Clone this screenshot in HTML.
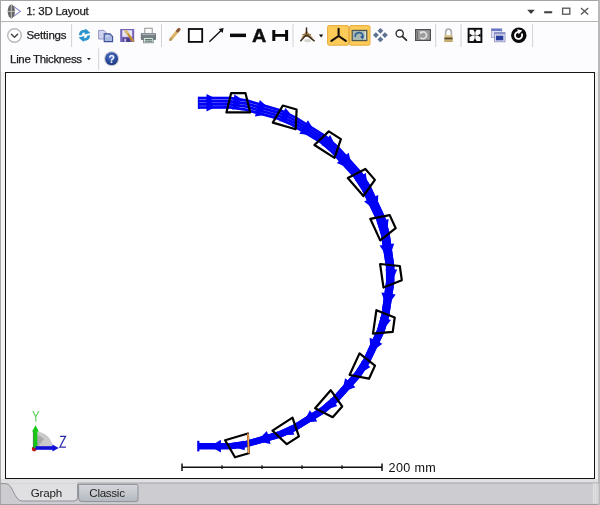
<!DOCTYPE html>
<html><head><meta charset="utf-8">
<style>
html,body{margin:0;padding:0;}
body{width:600px;height:505px;overflow:hidden;background:#f0f0f0;font-family:"Liberation Sans",sans-serif;position:relative;}
.abs{position:absolute;}
#win{position:absolute;left:0;top:0;width:600px;height:505px;background:#fcfbfe;}
#margin{position:absolute;left:1px;top:72px;width:597px;height:411px;background:#f3f3f5;}
#topline{position:absolute;left:0;top:0;width:600px;height:1px;background:#a4a4a4;}
#leftline{position:absolute;left:0;top:0;width:1px;height:505px;background:#a8a8a8;}
#rightline{position:absolute;left:598px;top:0;width:2px;height:505px;background:#b8b8b8;}
#title{position:absolute;left:1px;top:1px;width:597px;height:20px;background:#ffffff;}
#titlesep{position:absolute;left:1px;top:20.5px;width:597px;height:1px;background:#b4b4b4;}
.t{position:absolute;white-space:nowrap;color:#1c1c1c;font-size:11.5px;line-height:14px;filter:blur(0.3px);-webkit-text-stroke:0.25px #1c1c1c;}
#plot{position:absolute;left:4.5px;top:71.8px;width:588.5px;height:405.3px;border:1.5px solid #141414;background:#fff;box-sizing:content-box;}
#bottom{position:absolute;left:1px;top:483px;width:598px;height:22px;background:#cdcdd1;}
#bottomtop{position:absolute;left:1px;top:482.5px;width:598px;height:1px;background:#a6a6aa;}
#bottomline{position:absolute;left:0;top:503.5px;width:600px;height:1.5px;background:#9c9ca0;}
</style></head><body>
<div id="win"></div>
<div id="margin"></div>
<div id="title"></div>
<div id="titlesep"></div>
<div id="plot"></div>
<div id="bottom"></div>
<div id="bottomtop"></div>
<div id="bottomline"></div>
<div id="topline"></div><div id="leftline"></div><div id="rightline"></div>

<div class="t" style="left:26.2px;top:4.4px;letter-spacing:-0.24px;">1: 3D Layout</div>
<div class="t" style="left:26.4px;top:28.4px;letter-spacing:-0.2px;">Settings</div>
<div class="t" style="left:10.1px;top:52.1px;letter-spacing:-0.35px;">Line Thickness</div>

<svg class="abs" style="left:0;top:0" width="600" height="505" viewBox="0 0 600 505">
<defs>
<filter id="bl" x="-20%" y="-20%" width="140%" height="140%"><feGaussianBlur stdDeviation="0.45"/></filter>
<filter id="bl2" x="-20%" y="-20%" width="140%" height="140%"><feGaussianBlur stdDeviation="0.3"/></filter>
<radialGradient id="helpg" cx="0.45" cy="0.35" r="0.7"><stop offset="0" stop-color="#5a7fd0"/><stop offset="0.6" stop-color="#2a4a9c"/><stop offset="1" stop-color="#1a2f70"/></radialGradient>
<linearGradient id="tabg" x1="0" y1="0" x2="0" y2="1"><stop offset="0" stop-color="#d6d8dc"/><stop offset="1" stop-color="#b4b8c0"/></linearGradient>
</defs>
<!-- title icon -->
<g filter="url(#bl2)">
<path d="M13.6,6.4 L20.4,11.4 L13.6,16.4" fill="#fff" stroke="#7a82c8" stroke-width="1.1" stroke-linejoin="round"/>
<ellipse cx="11.3" cy="11.4" rx="3.6" ry="7" fill="#666"/>
<path d="M11.3,4.6 V18.2 M7.8,11.4 H14.8" stroke="#c8c8c8" stroke-width="0.9"/>
</g>
<!-- window controls -->
<path d="M527.2,9.8 H534.8 L531,13.9 Z" fill="#3c3c3c"/>
<rect x="544.2" y="11.2" width="8" height="2.1" fill="#444"/>
<rect x="562.6" y="8.2" width="7.2" height="6" fill="none" stroke="#555" stroke-width="1.3"/>
<path d="M581,8.1 L588.2,14.5 M588.2,8.1 L581,14.5" stroke="#555" stroke-width="1.3" fill="none"/>

<!-- separators row1 -->
<g stroke="#d2d2d4" stroke-width="1">
<path d="M71.6,24 V47"/><path d="M161.5,24 V47"/><path d="M293,24 V47"/><path d="M435.7,24 V47"/><path d="M461,24 V47"/><path d="M532.6,24 V47"/>
<path d="M98.7,48.5 V70"/>
</g>

<!-- settings chevron -->
<circle cx="14.5" cy="35.5" r="6.8" fill="#fff" stroke="#bababa" stroke-width="1.4"/>
<path d="M11.4,34.2 L14.5,37.2 L17.6,34.2" fill="none" stroke="#444" stroke-width="1.5" stroke-linecap="round" stroke-linejoin="round"/>

<!-- refresh -->
<g filter="url(#bl)" fill="none" stroke="#2b94cc" stroke-width="2.7" stroke-linecap="butt">
<path d="M80.4,35.2 C80.2,31.6 84,30 87.2,32"/>
<path d="M88.6,35.4 C88.8,39 85,40.6 81.8,38.6"/>
<path d="M85.4,28.6 L90.4,33 L84.6,34.6 Z" fill="#2b94cc" stroke="none"/>
<path d="M83.6,42 L78.6,37.6 L84.4,36 Z" fill="#2b94cc" stroke="none"/>
</g>
<!-- copy -->
<g filter="url(#bl)">
<path d="M98.6,30.4 H104 L106.4,32.8 V39 H98.6 Z" fill="#d0d4ee" stroke="#8a8fc0" stroke-width="0.9"/>
<path d="M104.2,33.9 H110 L112.6,36.4 V41.6 H104.2 Z" fill="#a9b9e2" stroke="#3f4f98" stroke-width="1.1"/>
<path d="M106,36 H108.8" stroke="#e6ecfa" stroke-width="1"/>
</g>
<!-- save -->
<g filter="url(#bl)">
<rect x="120.2" y="29" width="14" height="13" fill="#7363b8"/>
<rect x="122.2" y="30.2" width="10" height="6.6" fill="#e8e2f2"/>
<rect x="123.2" y="38.2" width="7" height="3.8" fill="#4a3a8a"/>
<rect x="124.2" y="38.8" width="2" height="3" fill="#c8c0e8"/>
<path d="M125.4,30.6 L133.4,41.4" stroke="#c48c2c" stroke-width="2.4"/>
<path d="M125.2,30.2 L128,33.8" stroke="#d8c070" stroke-width="2"/>
</g>
<!-- print -->
<g filter="url(#bl)">
<rect x="144.8" y="28.2" width="7.4" height="5.4" fill="#fafafa" stroke="#8a8a8a" stroke-width="0.9"/>
<rect x="140.8" y="33" width="15.2" height="7" rx="1" fill="#727a82"/>
<rect x="141.8" y="33.6" width="13.2" height="1.6" fill="#a8aeb4"/>
<rect x="143.6" y="37.6" width="9.6" height="5.2" fill="#d0e6de" stroke="#70807a" stroke-width="0.8"/>
<path d="M145,39.6 H152 M145,41.2 H152" stroke="#404848" stroke-width="0.8"/>
</g>

<!-- pencil -->
<g filter="url(#bl2)">
<path d="M170.6,39.4 L178.6,29.8" stroke="#dcb46a" stroke-width="3.2" stroke-linecap="round"/>
<path d="M177.6,31 L179,29.4" stroke="#8c5a3c" stroke-width="3" stroke-linecap="round"/>
<path d="M170.2,40 L171.2,38.6" stroke="#b09870" stroke-width="2" stroke-linecap="round"/>
</g>
<!-- square -->
<rect x="188.8" y="29" width="13.4" height="12.9" fill="#fff" stroke="#0a0a0a" stroke-width="1.8"/>
<!-- arrow -->
<path d="M209.4,41.8 L222.4,29.2" stroke="#111" stroke-width="1.4" fill="none"/>
<path d="M223.6,28 L222.6,33 L218.6,29 Z" fill="#111"/>
<!-- thick line -->
<rect x="230" y="33.6" width="16" height="3.5" fill="#0a0a0a"/>
<!-- A -->
<text transform="translate(259.1,0) scale(1.09,1) translate(-259.1,0)" filter="url(#bl2)" x="259.1" y="41.7" font-family="Liberation Sans, sans-serif" font-weight="bold" font-size="18.2" text-anchor="middle" fill="#0a0a0a" stroke="#0a0a0a" stroke-width="0.4">A</text>
<!-- dimension H -->
<path d="M273.8,29.9 V40.9 M286.6,29.9 V40.9" stroke="#0a0a0a" stroke-width="3"/>
<path d="M273.8,35.4 H286.6" stroke="#0a0a0a" stroke-width="2.8"/>

<!-- 3d object icon -->
<g filter="url(#bl)">
<ellipse cx="307.6" cy="40.6" rx="3.4" ry="1.6" fill="#d4d4cc"/>
<path d="M306.5,30.5 L300.8,38.6 L306.5,36.6 L313.4,38.6 Z" fill="#b48c54" opacity="0.85"/>
<path d="M306.5,28 V36 M306.5,34.6 L300.8,40.8 M306.5,34.6 L314.2,40.8" stroke="#3c2c1c" stroke-width="1.5" fill="none" stroke-linecap="round"/>
<path d="M302.4,34.6 H311" stroke="#8a6a40" stroke-width="1"/>
</g>
<path d="M318.9,34.4 H323.3 L321.1,37.4 Z" fill="#111"/>

<!-- highlighted buttons -->
<rect x="327.6" y="25.6" width="21" height="19.6" rx="1.5" fill="#fccb58" stroke="#e6ab3c" stroke-width="1"/>
<rect x="349.6" y="25.6" width="20.4" height="19.6" rx="1.5" fill="#fccb58" stroke="#e6ab3c" stroke-width="1"/>
<path d="M338.6,28.8 V36 L331.4,40.8 M338.6,36 L345.8,40.8" stroke="#16100a" stroke-width="2.1" fill="none" stroke-linecap="round" stroke-linejoin="round"/>
<g filter="url(#bl2)">
<rect x="352.2" y="30.4" width="14.6" height="10.2" fill="#a9b8b0" stroke="#4c544e" stroke-width="1.2"/>
<path d="M355.4,37 A3.8,3.3 0 1 1 362.4,37.4" fill="none" stroke="#2e5f96" stroke-width="1.7"/>
<path d="M364.4,35.6 L362.6,39.4 L360,36.4 Z" fill="#2e5f96"/>
<path d="M365.2,31.6 V39.4" stroke="#e8eeea" stroke-width="1.2"/>
</g>
<!-- move icon -->
<g filter="url(#bl2)" fill="#5c7192">
<path d="M380.4,27.9 L383.3,30.8 L380.4,33.7 L377.5,30.8 Z"/>
<path d="M380.4,36.5 L383.3,39.4 L380.4,42.3 L377.5,39.4 Z"/>
<path d="M375.9,32.2 L378.8,35.1 L375.9,38.0 L373.0,35.1 Z"/>
<path d="M384.9,32.2 L387.8,35.1 L384.9,38.0 L382.0,35.1 Z"/>
</g>
<!-- magnifier -->
<circle cx="399.7" cy="33.6" r="3.6" fill="#fff" stroke="#2c2c2c" stroke-width="1.35"/>
<path d="M402.4,36.4 L406.4,40.2" stroke="#2c2c2c" stroke-width="1.8" stroke-linecap="round"/>
<!-- reset -->
<g filter="url(#bl2)">
<rect x="415.6" y="29.6" width="14.8" height="10.8" fill="#9c9c9c" stroke="#505050" stroke-width="1.2"/>
<path d="M420.2,37.4 A3.6,3.3 0 1 0 421.6,32.2" fill="none" stroke="#e0e0e0" stroke-width="1.5"/>
<path d="M419.6,31.4 L423.4,31.4 L420.6,34.6 Z" fill="#e8e8e8"/>
<path d="M417.4,31 V39" stroke="#6a6a6a" stroke-width="1"/>
</g>
<!-- lock -->
<g filter="url(#bl)">
<path d="M445.6,35.6 V32.4 A2.9,3.4 0 0 1 451.4,32.4 V35.6" fill="none" stroke="#a8a8a8" stroke-width="1.5"/>
<rect x="444.4" y="35.2" width="8.2" height="6.8" fill="#d2bc84"/>
<rect x="444.4" y="37.6" width="8.2" height="1.8" fill="#5a4a2a"/>
<rect x="444.4" y="40.4" width="8.2" height="1.6" fill="#c0a868"/>
</g>
<!-- grid icon -->
<rect x="468.6" y="28.8" width="12.8" height="13.2" fill="#fff" stroke="#0a0a0a" stroke-width="1.9"/>
<path d="M473.2,29.6 H476.8 L475,32.6 Z M473.2,41.2 H476.8 L475,38.2 Z M469.4,33.6 V37.2 L472.4,35.4 Z M480.6,33.6 V37.2 L477.6,35.4 Z" fill="#0a0a0a"/>
<path d="M475,32 V38.8 M471.8,35.4 H478.2" stroke="#555" stroke-width="0.7"/>
<!-- windows icon -->
<g filter="url(#bl)">
<rect x="491.4" y="28.8" width="10.4" height="8.6" fill="#dfe0f4" stroke="#9aa0cc" stroke-width="0.8"/>
<rect x="491.4" y="28.8" width="10.4" height="2.2" fill="#6a78c4"/>
<rect x="494.6" y="32.6" width="10.4" height="9.2" fill="#f4f4fc" stroke="#8088b8" stroke-width="0.8"/>
<rect x="494.6" y="32.6" width="10.4" height="1.8" fill="#8890c8"/>
<rect x="495.8" y="35.6" width="7.6" height="4.8" fill="#2c3c9c"/>
</g>
<!-- black circle arrow -->
<circle cx="518.8" cy="35.3" r="7.7" fill="#0a0a0a"/>
<path d="M521.6,33.4 A3.6,3.6 0 1 1 518,31.8" fill="none" stroke="#fff" stroke-width="1.8"/>
<path d="M517.2,29.2 L522.4,30.6 L518.6,34.2 Z" fill="#fff"/>

<!-- row2 dropdown arrow -->
<path d="M87,58 H90.8 L88.9,60.2 Z" fill="#222"/>
<!-- help -->
<g filter="url(#bl2)">
<circle cx="111.6" cy="58.7" r="7.4" fill="#c0c4d0"/>
<circle cx="111.6" cy="58.7" r="6.4" fill="url(#helpg)"/>
<text x="111.6" y="62.6" font-family="Liberation Sans, sans-serif" font-weight="bold" font-size="10.5" text-anchor="middle" fill="#fff">?</text>
</g>

<g filter="url(#bl2)">
<path d="M198.3,108.9 L229.9,108.8 L244.7,110.9 L277.4,119.6 L291.2,125.7 L319.9,143.1 L331.4,153.0 L353.7,177.6 L362.0,190.3 L376.3,219.9 L380.8,234.5 L385.9,266.8 L386.0,282.1 L381.4,314.5 L377.2,329.2 L363.4,359.2 L355.1,372.1 L332.9,397.0 L321.4,407.1 L292.8,424.9 L278.8,431.3 L246.2,440.7 L231.0,442.9 L198.0,443.0 L198.0,449.2 L231.4,449.3 L247.6,447.0 L281.2,437.6 L296.0,430.8 L325.5,412.6 L337.9,402.0 L360.9,376.4 L369.8,362.7 L384.5,331.9 L389.2,316.2 L394.3,282.7 L394.4,266.2 L389.5,232.6 L385.0,216.7 L370.5,185.7 L361.6,171.7 L338.4,145.9 L325.9,135.0 L296.2,116.4 L281.2,109.3 L247.2,99.3 L230.7,96.8 L198.3,96.7Z" fill="#0404f6" opacity="0.3"/>
<path d="M198.3,98.0 L230.6,98.2 L247.0,100.6 L280.7,110.5 L295.6,117.6 L325.1,136.1 L337.5,146.9 L360.5,172.5 L369.3,186.3 L383.8,217.2 L388.2,232.8 L393.0,266.3 L393.0,282.6 L387.9,316.0 L383.2,331.5 L368.6,362.0 L359.8,375.6 L336.9,401.0 L324.7,411.5 L295.4,429.6 L280.7,436.3 L247.3,445.7 L231.3,447.9 L198.0,447.9" fill="none" stroke="#0404f6" stroke-width="2.7" stroke-linejoin="round"/>
<path d="M198.3,101.2 L230.4,101.3 L246.3,103.6 L279.8,113.1 L294.3,119.9 L323.6,138.1 L335.7,148.6 L358.6,173.9 L367.2,187.4 L381.7,217.9 L386.2,233.3 L391.1,266.5 L391.1,282.4 L386.2,315.6 L381.6,330.9 L367.2,361.3 L358.6,374.7 L335.9,400.0 L323.9,410.4 L294.7,428.5 L280.2,435.1 L247.0,444.5 L231.2,446.7 L198.0,446.7" fill="none" stroke="#0404f6" stroke-width="2.7" stroke-linejoin="round"/>
<path d="M198.3,104.4 L230.2,104.3 L245.7,106.5 L278.8,115.8 L293.1,122.2 L322.2,140.1 L334.0,150.3 L356.7,175.4 L365.2,188.5 L379.7,218.7 L384.1,233.7 L389.2,266.6 L389.2,282.3 L384.5,315.2 L380.1,330.3 L365.9,360.6 L357.4,373.8 L334.9,399.0 L323.0,409.3 L294.1,427.3 L279.8,433.8 L246.7,443.2 L231.2,445.5 L198.0,445.5" fill="none" stroke="#0404f6" stroke-width="2.7" stroke-linejoin="round"/>
<path d="M198.3,107.5 L230.0,107.4 L245.0,109.5 L277.8,118.4 L291.8,124.5 L320.7,142.0 L332.3,152.0 L354.8,176.8 L363.1,189.6 L377.6,219.5 L382.1,234.2 L387.3,266.7 L387.3,282.2 L382.7,314.8 L378.5,329.7 L364.5,359.8 L356.2,372.9 L333.9,397.9 L322.2,408.1 L293.4,426.1 L279.3,432.6 L246.5,442.0 L231.1,444.3 L198.0,444.4" fill="none" stroke="#0404f6" stroke-width="2.7" stroke-linejoin="round"/>
<path d="M353.7,177.6 L362.0,190.3 L376.3,219.9 L380.8,234.5 L385.9,266.8 L386.0,282.1 L381.4,314.5 L377.2,329.2 L363.4,359.2 L355.1,372.1 L332.9,397.0 L321.4,407.1 L292.8,424.9 L278.8,431.3 L246.2,440.7 L231.0,442.9 L198.0,443.0 L198.0,449.2 L231.4,449.3 L247.6,447.0 L281.2,437.6 L296.0,430.8 L325.5,412.6 L337.9,402.0 L360.9,376.4 L369.8,362.7 L384.5,331.9 L389.2,316.2 L394.3,282.7 L394.4,266.2 L389.5,232.6 L385.0,216.7 L370.5,185.7 L361.6,171.7Z" fill="#0404f6"/>
<path d="M214.5,98.0 L206.5,102.0 L206.5,94.0 Z" fill="#0404f6"/>
<path d="M214.5,101.2 L206.5,105.2 L206.5,97.2 Z" fill="#0404f6"/>
<path d="M214.5,104.4 L206.5,108.4 L206.5,100.4 Z" fill="#0404f6"/>
<path d="M214.5,107.5 L206.5,111.5 L206.5,103.5 Z" fill="#0404f6"/>
<path d="M266.8,106.2 L257.5,107.6 L259.8,100.0 Z" fill="#0404f6"/>
<path d="M265.9,109.1 L256.7,110.6 L258.9,102.9 Z" fill="#0404f6"/>
<path d="M265.1,112.1 L255.8,113.5 L258.0,105.8 Z" fill="#0404f6"/>
<path d="M264.2,115.0 L254.9,116.4 L257.2,108.8 Z" fill="#0404f6"/>
<path d="M312.9,128.4 L303.6,127.2 L308.0,120.3 Z" fill="#0404f6"/>
<path d="M311.5,130.6 L302.2,129.4 L306.6,122.6 Z" fill="#0404f6"/>
<path d="M310.1,132.8 L300.8,131.6 L305.2,124.8 Z" fill="#0404f6"/>
<path d="M308.7,135.0 L299.4,133.8 L303.8,127.0 Z" fill="#0404f6"/>
<path d="M351.0,161.9 L342.3,158.2 L348.6,152.8 Z" fill="#0404f6"/>
<path d="M349.1,163.5 L340.4,159.8 L346.7,154.4 Z" fill="#0404f6"/>
<path d="M347.3,165.1 L338.6,161.4 L344.9,156.0 Z" fill="#0404f6"/>
<path d="M345.5,166.7 L336.8,163.0 L343.1,157.5 Z" fill="#0404f6"/>
<path d="M377.9,204.4 L370.5,198.5 L378.2,194.9 Z" fill="#0404f6"/>
<path d="M375.7,205.4 L368.4,199.4 L376.1,195.9 Z" fill="#0404f6"/>
<path d="M373.6,206.4 L366.2,200.4 L374.0,196.9 Z" fill="#0404f6"/>
<path d="M371.5,207.3 L364.1,201.4 L371.8,197.8 Z" fill="#0404f6"/>
<path d="M391.2,252.5 L385.7,244.8 L394.2,243.5 Z" fill="#0404f6"/>
<path d="M389.1,252.8 L383.6,245.0 L392.2,243.8 Z" fill="#0404f6"/>
<path d="M387.0,253.1 L381.6,245.3 L390.1,244.1 Z" fill="#0404f6"/>
<path d="M385.0,253.4 L379.5,245.6 L388.1,244.4 Z" fill="#0404f6"/>
<path d="M390.1,302.3 L387.0,293.2 L395.7,294.5 Z" fill="#0404f6"/>
<path d="M388.2,302.0 L385.1,292.9 L393.8,294.2 Z" fill="#0404f6"/>
<path d="M386.4,301.7 L383.2,292.7 L392.0,293.9 Z" fill="#0404f6"/>
<path d="M384.5,301.4 L381.4,292.4 L390.1,293.7 Z" fill="#0404f6"/>
<path d="M374.7,349.5 L374.2,339.9 L382.4,343.7 Z" fill="#0404f6"/>
<path d="M373.2,348.8 L372.7,339.2 L380.8,343.0 Z" fill="#0404f6"/>
<path d="M371.7,348.1 L371.1,338.5 L379.3,342.3 Z" fill="#0404f6"/>
<path d="M370.2,347.4 L369.6,337.8 L377.8,341.6 Z" fill="#0404f6"/>
<path d="M346.5,390.6 L348.6,381.2 L355.5,387.2 Z" fill="#0404f6"/>
<path d="M345.3,389.6 L347.4,380.2 L354.3,386.2 Z" fill="#0404f6"/>
<path d="M344.2,388.6 L346.3,379.2 L353.2,385.2 Z" fill="#0404f6"/>
<path d="M343.0,387.6 L345.1,378.2 L352.1,384.2 Z" fill="#0404f6"/>
<path d="M307.6,422.3 L312.2,413.7 L317.2,421.6 Z" fill="#0404f6"/>
<path d="M306.8,421.1 L311.4,412.5 L316.5,420.4 Z" fill="#0404f6"/>
<path d="M306.0,419.9 L310.7,411.4 L315.7,419.2 Z" fill="#0404f6"/>
<path d="M305.3,418.7 L309.9,410.2 L314.9,418.0 Z" fill="#0404f6"/>
<path d="M261.1,441.9 L267.9,434.9 L270.6,444.1 Z" fill="#0404f6"/>
<path d="M260.7,440.6 L267.6,433.7 L270.2,442.8 Z" fill="#0404f6"/>
<path d="M260.4,439.4 L267.2,432.4 L269.9,441.5 Z" fill="#0404f6"/>
<path d="M260.0,438.1 L266.8,431.1 L269.5,440.3 Z" fill="#0404f6"/>
<path d="M213.2,447.9 L220.8,443.3 L220.8,452.5 Z" fill="#0404f6"/>
<path d="M213.2,446.7 L220.8,442.1 L220.8,451.3 Z" fill="#0404f6"/>
<path d="M213.2,445.5 L220.8,440.9 L220.8,450.1 Z" fill="#0404f6"/>
<path d="M213.2,444.4 L220.8,439.8 L220.8,449.0 Z" fill="#0404f6"/>
<path d="M240.9,98.5 L233.6,100.5 L234.4,94.5 Z" fill="#0404f6"/>
<path d="M240.5,101.6 L233.1,103.5 L234.0,97.6 Z" fill="#0404f6"/>
<path d="M240.1,104.6 L232.7,106.6 L233.6,100.6 Z" fill="#0404f6"/>
<path d="M239.6,107.7 L232.3,109.7 L233.1,103.7 Z" fill="#0404f6"/>
<path d="M290.5,113.7 L282.9,113.6 L285.4,108.1 Z" fill="#0404f6"/>
<path d="M289.4,116.3 L281.7,116.1 L284.2,110.6 Z" fill="#0404f6"/>
<path d="M288.2,118.8 L280.6,118.6 L283.1,113.2 Z" fill="#0404f6"/>
<path d="M287.0,121.3 L279.4,121.2 L281.9,115.7 Z" fill="#0404f6"/>
<path d="M333.6,141.9 L326.3,139.6 L330.2,135.1 Z" fill="#0404f6"/>
<path d="M332.0,143.8 L324.7,141.5 L328.6,136.9 Z" fill="#0404f6"/>
<path d="M330.3,145.6 L323.1,143.3 L327.0,138.8 Z" fill="#0404f6"/>
<path d="M328.7,147.5 L321.5,145.2 L325.4,140.6 Z" fill="#0404f6"/>
<path d="M366.9,180.5 L360.6,176.2 L365.7,173.0 Z" fill="#0404f6"/>
<path d="M365.0,181.7 L358.6,177.5 L363.7,174.2 Z" fill="#0404f6"/>
<path d="M363.0,183.0 L356.7,178.7 L361.7,175.5 Z" fill="#0404f6"/>
<path d="M361.0,184.3 L354.7,180.0 L359.7,176.8 Z" fill="#0404f6"/>
<path d="M387.7,226.6 L382.9,220.7 L388.6,219.0 Z" fill="#0404f6"/>
<path d="M385.6,227.2 L380.8,221.3 L386.5,219.6 Z" fill="#0404f6"/>
<path d="M383.5,227.8 L378.7,222.0 L384.4,220.3 Z" fill="#0404f6"/>
<path d="M381.4,228.4 L376.6,222.6 L382.3,220.9 Z" fill="#0404f6"/>
<path d="M394.2,276.5 L391.2,269.5 L397.2,269.5 Z" fill="#0404f6"/>
<path d="M392.3,276.5 L389.3,269.5 L395.3,269.5 Z" fill="#0404f6"/>
<path d="M390.3,276.5 L387.3,269.5 L393.3,269.5 Z" fill="#0404f6"/>
<path d="M388.4,276.5 L385.4,269.5 L391.4,269.5 Z" fill="#0404f6"/>
<path d="M386.2,326.0 L385.3,318.4 L391.0,320.1 Z" fill="#0404f6"/>
<path d="M384.5,325.5 L383.6,317.9 L389.3,319.6 Z" fill="#0404f6"/>
<path d="M382.8,325.0 L381.9,317.4 L387.6,319.1 Z" fill="#0404f6"/>
<path d="M381.1,324.5 L380.2,316.9 L385.9,318.6 Z" fill="#0404f6"/>
<path d="M364.1,371.1 L365.4,363.6 L370.4,366.9 Z" fill="#0404f6"/>
<path d="M362.8,370.3 L364.1,362.8 L369.1,366.0 Z" fill="#0404f6"/>
<path d="M361.5,369.5 L362.8,362.0 L367.8,365.2 Z" fill="#0404f6"/>
<path d="M360.2,368.6 L361.5,361.1 L366.5,364.4 Z" fill="#0404f6"/>
<path d="M330.1,408.5 L333.4,401.6 L337.3,406.1 Z" fill="#0404f6"/>
<path d="M329.1,407.4 L332.5,400.5 L336.4,405.1 Z" fill="#0404f6"/>
<path d="M328.2,406.3 L331.5,399.4 L335.5,404.0 Z" fill="#0404f6"/>
<path d="M327.3,405.2 L330.6,398.3 L334.5,402.9 Z" fill="#0404f6"/>
<path d="M286.7,434.9 L291.8,429.2 L294.3,434.7 Z" fill="#0404f6"/>
<path d="M286.1,433.6 L291.3,428.0 L293.8,433.5 Z" fill="#0404f6"/>
<path d="M285.6,432.4 L290.7,426.8 L293.2,432.2 Z" fill="#0404f6"/>
<path d="M285.0,431.2 L290.1,425.6 L292.6,431.0 Z" fill="#0404f6"/>
<path d="M237.5,448.3 L244.0,444.3 L244.8,450.2 Z" fill="#0404f6"/>
<path d="M237.3,447.0 L243.8,443.0 L244.7,449.0 Z" fill="#0404f6"/>
<path d="M237.1,445.8 L243.6,441.8 L244.5,447.7 Z" fill="#0404f6"/>
<path d="M237.0,444.5 L243.5,440.6 L244.3,446.5 Z" fill="#0404f6"/>
<path d="M198.3,440.8 V451.4" stroke="#0404f6" stroke-width="2.2"/>
<path d="M198.6,96.8 V108.9" stroke="#0404f6" stroke-width="1.5"/>
<path d="M231.1,93.2 L245.5,93.2 L250.2,112.4 L226.4,112.4Z" fill="none" stroke="#000" stroke-width="2.2" stroke-linejoin="round"/>
<path d="M282.8,105.5 L296.6,109.5 L295.7,129.3 L272.8,122.6Z" fill="none" stroke="#000" stroke-width="2.2" stroke-linejoin="round"/>
<path d="M328.8,131.4 L340.9,139.2 L334.5,157.9 L314.4,145.0Z" fill="none" stroke="#000" stroke-width="2.2" stroke-linejoin="round"/>
<path d="M365.4,169.0 L374.9,179.9 L363.4,196.0 L347.8,178.0Z" fill="none" stroke="#000" stroke-width="2.2" stroke-linejoin="round"/>
<path d="M389.7,215.1 L395.7,228.2 L380.2,240.4 L370.3,218.8Z" fill="none" stroke="#000" stroke-width="2.2" stroke-linejoin="round"/>
<path d="M399.8,266.0 L401.8,280.2 L383.5,287.6 L380.1,264.0Z" fill="none" stroke="#000" stroke-width="2.2" stroke-linejoin="round"/>
<path d="M394.7,317.6 L392.7,331.8 L373.0,333.7 L376.4,310.2Z" fill="none" stroke="#000" stroke-width="2.2" stroke-linejoin="round"/>
<path d="M375.0,365.6 L369.0,378.7 L349.6,375.0 L359.5,353.4Z" fill="none" stroke="#000" stroke-width="2.2" stroke-linejoin="round"/>
<path d="M342.2,406.4 L332.7,417.2 L315.1,408.2 L330.7,390.2Z" fill="none" stroke="#000" stroke-width="2.2" stroke-linejoin="round"/>
<path d="M298.9,436.4 L286.8,444.2 L272.5,430.6 L292.5,417.7Z" fill="none" stroke="#000" stroke-width="2.2" stroke-linejoin="round"/>
<path d="M248.8,453.3 L235.0,457.3 L225.1,440.2 L247.9,433.5Z" fill="none" stroke="#000" stroke-width="2.2" stroke-linejoin="round"/>
<path d="M247.9,433.5 L248.8,453.3" stroke="#f09a4c" stroke-width="1.8"/>
</g>
<!-- scale bar -->
<path d="M182,467.2 H382" stroke="#111" stroke-width="1.4"/>
<path d="M182,463.4 V471 M382,463.4 V471" stroke="#111" stroke-width="1.5"/>
<path d="M222,465.2 V469 M262,465.2 V469 M302,465.2 V469 M342,465.2 V469" stroke="#111" stroke-width="1.3"/>
<text filter="url(#bl2)" x="388.6" y="472.4" font-family="Liberation Sans, sans-serif" font-size="12.6" letter-spacing="0.35" fill="#111">200 mm</text>
<!-- axes triad -->
<path d="M35.5,448 V431.5 A16.8,16.5 0 0 1 52.6,448 Z" fill="#cacaca"/>
<path d="M37,448 V435 A13,13 0 0 1 44,439 Z" fill="#aaaaaa"/>
<circle cx="34.2" cy="449" r="2.4" fill="#c01818"/>
<path d="M35.5,448 V430" stroke="#14c814" stroke-width="3.6"/>
<path d="M33.4,448 V430" stroke="#0a7a0a" stroke-width="0.8"/>
<path d="M35.5,425.2 L38.9,431.4 H32.1 Z" fill="#14c814"/>
<path d="M35.5,448 H53" stroke="#1010d8" stroke-width="3.6"/>
<path d="M58.8,448 L52.4,451.6 V444.4 Z" fill="#1010d8"/>

<path d="M32.8,411 L35.8,416.8 L38.9,411 M35.8,416.8 V421.8" fill="none" stroke="#5ad25a" stroke-width="1.15"/>
<path d="M60,436.3 H65.5 L59.9,447 H65.9" fill="none" stroke="#2c2ca8" stroke-width="1.25"/>
<!-- tabs -->
<path d="M1,483 H599 V503.5 H1 Z" fill="#cdcdd1"/>
<path d="M78.6,484.4 H136 Q138,484.4 138,486.4 V499.6 Q138,501.6 136,501.6 H82 Q78.6,501.6 78.6,498 Z" fill="url(#tabg)" stroke="#8e9096" stroke-width="1"/>
<path d="M1,483.6 H5.5 C13.5,483.6 13.5,501 22.5,501 H74 Q77.6,501 77.6,497.4 V483.6 Z" fill="#e0e0e3"/>
<path d="M1,483.6 H5.5 C13.5,483.6 13.5,501 22.5,501 H74 Q77.6,501 77.6,497.4 V484" fill="none" stroke="#8e9096" stroke-width="1"/>
<path d="M1,479 H598 V483 H1 Z" fill="#e0e0e3"/>
<path d="M77.6,483 H599" stroke="#a6a6aa" stroke-width="1"/>
<text filter="url(#bl2)" x="46.4" y="496.6" font-family="Liberation Sans, sans-serif" font-size="11.6" text-anchor="middle" fill="#222" letter-spacing="-0.2">Graph</text>
<text filter="url(#bl2)" x="107" y="496.6" font-family="Liberation Sans, sans-serif" font-size="11.6" text-anchor="middle" fill="#222" letter-spacing="-0.3">Classic</text>

<rect x="593.4" y="483.5" width="4.8" height="20" fill="#d6d6da"/>
<path d="M593.4,483.5 V503.5 M595.6,483.5 V503.5" stroke="#e6e6ea" stroke-width="0.7"/>

</svg>
</body></html>
